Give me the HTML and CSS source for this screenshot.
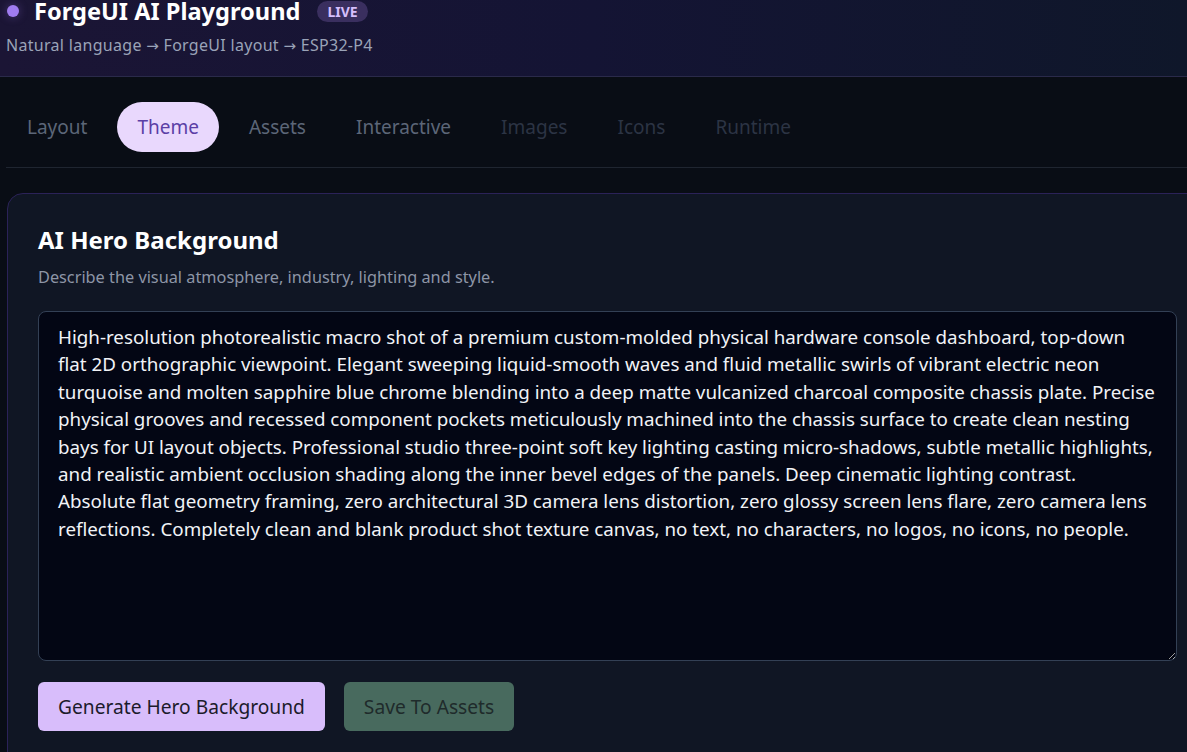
FILE: index.html
```html
<!DOCTYPE html>
<html lang="en">
<head>
<meta charset="utf-8">
<title>ForgeUI AI Playground</title>
<link rel="stylesheet" href="styles.css">
</head>
<body>
<header class="topbar">
  <div class="brand">
    <span class="brand-dot"></span>
    <h1 class="brand-title">ForgeUI AI Playground</h1>
    <span class="badge-live">LIVE</span>
  </div>
  <p class="brand-sub">Natural language <span class="arrow">→</span> ForgeUI layout <span class="arrow">→</span> ESP32-P4</p>
</header>

<main class="main">
  <nav class="tabs">
    <button class="tab">Layout</button>
    <button class="tab tab-active">Theme</button>
    <button class="tab">Assets</button>
    <button class="tab">Interactive</button>
    <button class="tab tab-muted">Images</button>
    <button class="tab tab-muted">Icons</button>
    <button class="tab tab-muted">Runtime</button>
  </nav>

  <section class="card">
    <h2 class="card-title">AI Hero Background</h2>
    <p class="card-desc">Describe the visual atmosphere, industry, lighting and style.</p>
    <textarea class="prompt" spellcheck="false" wrap="off">High-resolution photorealistic macro shot of a premium custom-molded physical hardware console dashboard, top-down
flat 2D orthographic viewpoint. Elegant sweeping liquid-smooth waves and fluid metallic swirls of vibrant electric neon
turquoise and molten sapphire blue chrome blending into a deep matte vulcanized charcoal composite chassis plate. Precise
physical grooves and recessed component pockets meticulously machined into the chassis surface to create clean nesting
bays for UI layout objects. Professional studio three-point soft key lighting casting micro-shadows, subtle metallic highlights,
and realistic ambient occlusion shading along the inner bevel edges of the panels. Deep cinematic lighting contrast.
Absolute flat geometry framing, zero architectural 3D camera lens distortion, zero glossy screen lens flare, zero camera lens
reflections. Completely clean and blank product shot texture canvas, no text, no characters, no logos, no icons, no people.</textarea>
    <div class="actions">
      <button class="btn btn-primary">Generate Hero Background</button>
      <button class="btn btn-save">Save To Assets</button>
    </div>
  </section>
</main>
</body>
</html>
```

FILE: styles.css
```css
* {
  box-sizing: border-box;
}

html, body {
  margin: 0;
  padding: 0;
  background: #090d15;
  overflow: hidden;
}

body {
  font-family: "Segoe UI", "Noto Sans", "Open Sans", sans-serif;
  color: #e5e7eb;
  width: 1187px;
  height: 752px;
}

/* header strip */
.topbar {
  display: flex;
  flex-direction: column;
  background: linear-gradient(90deg, #1b1535 0%, #141434 50%, #0f172a 100%);
  border-bottom: 1px solid #2a2a4a;
  padding: 0 6px;
  height: 77px;
}

.brand {
  display: flex;
  align-items: center;
  margin-top: -8px;
  height: 38px;
}

.brand-dot {
  width: 12px;
  height: 12px;
  border-radius: 50%;
  background: #a07cf0;
  margin-left: 1px;
  margin-right: 15px;
  box-shadow: 0 0 10px rgba(160, 124, 240, 0.35);
}

.brand-title {
  margin: 0;
  font-size: 23.6px;
  font-weight: 700;
  color: #ffffff;
  line-height: 38px;
}

.badge-live {
  margin-left: 17px;
  background: #3a2f5f;
  color: #d6bffc;
  font-size: 14px;
  font-weight: 700;
  padding: 0 10px;
  height: 21px;
  line-height: 21px;
  border-radius: 11px;
}

.brand-sub {
  margin: 4px 0 0;
  font-size: 16px;
  letter-spacing: 0.3px;
  color: #9aa3b8;
  line-height: 22px;
}

.arrow {
  font-family: "DejaVu Sans", sans-serif;
  font-size: 15px;
}

/* content */
.main {
  padding: 0 0 0 6px;
}

.tabs {
  display: flex;
  align-items: flex-start;
  height: 91px;
  padding: 25px 0 0 1px;
  border-bottom: 1px solid #1f2530;
}

.tab {
  font-family: inherit;
  font-size: 19px;
  background: none;
  border: 0;
  color: #5c6678;
  height: 50px;
  padding: 0 20px;
  margin-right: 10px;
  border-radius: 25px;
  cursor: pointer;
}

.tab-active {
  background: #e9d8fd;
  color: #5b3ea6;
}

.tab-muted {
  color: #2c3444;
}

.card {
  margin-top: 25px;
  margin-left: 1px;
  width: 1220px;
  background: #101624;
  border: 1px solid #2b2258;
  border-radius: 16px;
  padding: 28px 30px 40px;
}

.card-title {
  margin: 0;
  font-size: 24px;
  font-weight: 700;
  color: #ffffff;
  line-height: 36px;
}

.card-desc {
  margin: 6px 0 0;
  font-size: 16.3px;
  color: #8d95a6;
  line-height: 26px;
}

.prompt {
  display: block;
  margin-top: 21px;
  width: 1139px;
  height: 350px;
  background: #030614;
  border: 1px solid #334055;
  border-radius: 8px;
  color: #f1f3f7;
  font-family: inherit;
  font-size: 18.8px;
  line-height: 27.4px;
  padding: 12px 12px 12px 19px;
  resize: vertical;
  outline: none;
  overflow: hidden;
}

.actions {
  display: flex;
  gap: 19px;
  margin-top: 21px;
}

.btn {
  font-family: inherit;
  font-size: 19.2px;
  height: 49px;
  padding: 0 20px;
  border: 0;
  border-radius: 6px;
  cursor: pointer;
}

.btn-primary {
  background: #d8bdfb;
  color: #1c1b2b;
}

.btn-save {
  background: #486a5e;
  color: #1f2b2b;
}
```
